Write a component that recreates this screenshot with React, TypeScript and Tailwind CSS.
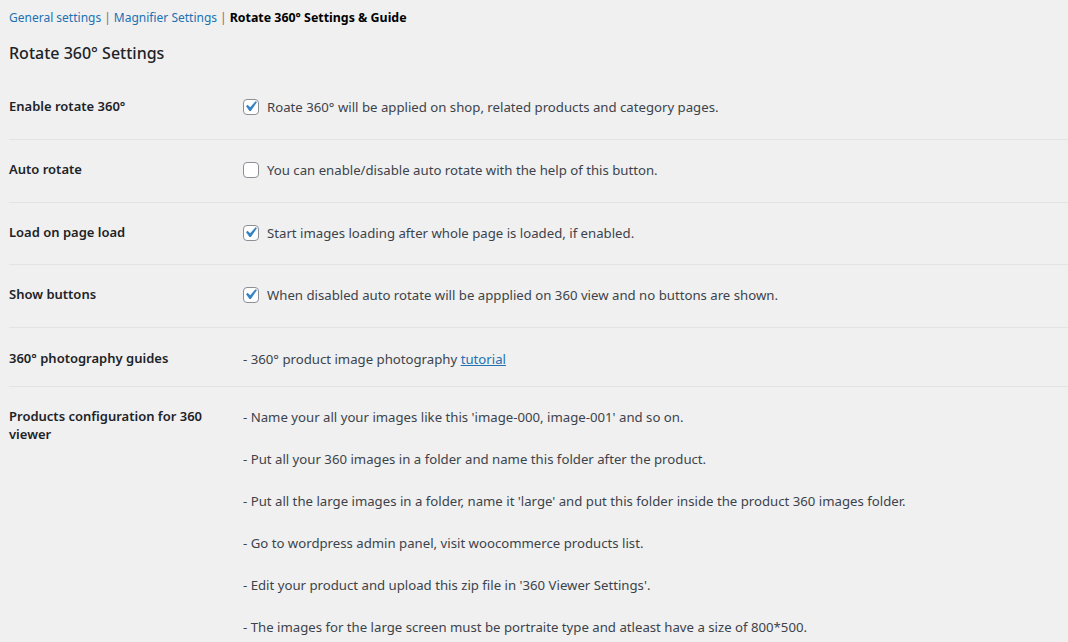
const rows = [
  {
    label: "Enable rotate 360°",
    checked: true,
    text: "Roate 360° will be applied on shop, related products and category pages.",
    h: "h-[63px]",
  },
  {
    label: "Auto rotate",
    checked: false,
    text: "You can enable/disable auto rotate with the help of this button.",
    h: "h-[63px]",
  },
  {
    label: "Load on page load",
    checked: true,
    text: "Start images loading after whole page is loaded, if enabled.",
    h: "h-[62px]",
  },
  {
    label: "Show buttons",
    checked: true,
    text: "When disabled auto rotate will be appplied on 360 view and no buttons are shown.",
    h: "h-[63px]",
  },
];

const steps = [
  "- Name your all your images like this 'image-000, image-001' and so on.",
  "- Put all your 360 images in a folder and name this folder after the product.",
  "- Put all the large images in a folder, name it 'large' and put this folder inside the product 360 images folder.",
  "- Go to wordpress admin panel, visit woocommerce products list.",
  "- Edit your product and upload this zip file in '360 Viewer Settings'.",
  "- The images for the large screen must be portraite type and atleast have a size of 800*500.",
];

function Checkbox({ checked }: { checked: boolean }) {
  return (
    <span className="relative mr-2 h-4 w-4 shrink-0 rounded-[4px] border border-[#8c8f94] bg-white">
      {checked && (
        <svg viewBox="0 0 20 20" className="absolute left-[-4px] top-[-4px] h-[21px] w-[21px]">
          <path
            d="M14.83 4.89l1.34.94-5.81 8.38H9.02L5.78 9.67l1.34-1.25 2.57 2.4z"
            fill="#3582c4"
          />
        </svg>
      )}
    </span>
  );
}

export default function App() {
  return (
    <div className="min-h-[642px] w-full overflow-hidden bg-[#f0f0f1] pl-[9px] font-['Noto_Sans',sans-serif] text-[13.2px] text-[#3c434a]">
      {/* Tabs */}
      <div className="flex h-[34px] items-center pt-[2px] text-[12px] leading-[18px]">
        <a className="text-[#2271b1]">General settings</a>
        <span className="mx-[3px] text-[#8a6d5b]">|</span>
        <a className="text-[#2271b1]">Magnifier Settings</a>
        <span className="mx-[3px] text-[#8a6d5b]">|</span>
        <span className="text-[12.4px] font-bold text-black">Rotate 360° Settings &amp; Guide</span>
      </div>

      <h2 className="h-[43px] pt-[8px] text-[16px] font-medium leading-[22px] text-[#1d2327]">
        Rotate 360° Settings
      </h2>

      {/* Settings table */}
      <div>
        {rows.map((r) => (
          <div key={r.label} className={`flex items-start border-b border-[#e3e3e4] pt-[20px] ${r.h}`}>
            <div className="w-[234px] shrink-0 text-[13px] font-semibold leading-[18px] text-[#1d2327]">
              {r.label}
            </div>
            <div className="flex items-center pt-[1px] leading-[18px]">
              <Checkbox checked={r.checked} />
              <span>{r.text}</span>
            </div>
          </div>
        ))}

        <div className="flex h-[59px] items-start border-b border-[#e3e3e4] pt-[21px]">
          <div className="w-[234px] shrink-0 text-[13px] font-semibold leading-[18px] text-[#1d2327]">
            360° photography guides
          </div>
          <div className="pt-[1px] leading-[18px]">
            - 360° product image photography{" "}
            <a className="text-[#2271b1] underline">tutorial</a>
          </div>
        </div>

        <div className="flex items-start pt-[20px]">
          <div className="w-[234px] shrink-0 pr-[20px] text-[13px] font-semibold leading-[18px] text-[#1d2327]">
            Products configuration for 360 viewer
          </div>
          <div className="flex flex-col gap-[24px] pt-[1px] leading-[18px]">
            {steps.map((s) => (
              <p key={s}>{s}</p>
            ))}
          </div>
        </div>
      </div>
    </div>
  );
}
